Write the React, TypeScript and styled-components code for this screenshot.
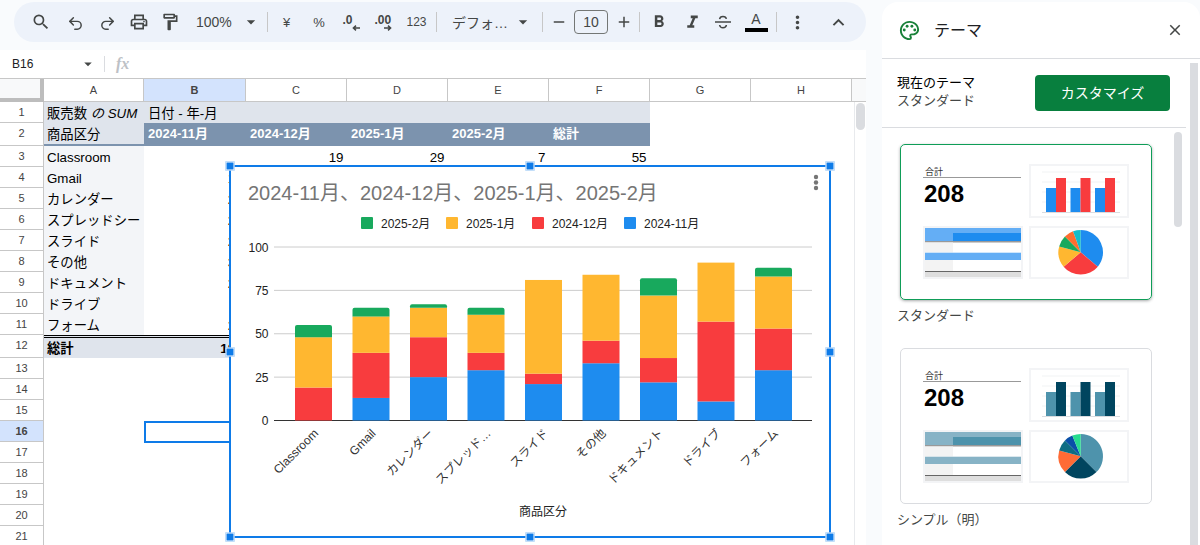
import React from 'react';
import styled, { createGlobalStyle } from 'styled-components';
import { Redo2, Undo2 } from 'lucide-react';
import {
  MdAdd,
  MdArrowDropDown,
  MdClose,
  MdFormatBold,
  MdFormatItalic,
  MdKeyboardArrowUp,
  MdMoreVert,
  MdOutlineFormatPaint,
  MdOutlinePalette,
  MdOutlinePrint,
  MdRemove,
  MdSearch,
} from 'react-icons/md';

const FONT = '"Liberation Sans", "Noto Sans CJK JP", sans-serif';
const SELECT_BLUE = '#0e7be8';

const SERIES = [
  { name: '2024-11月', color: '#1e8cef', legendX: 624 },
  { name: '2024-12月', color: '#f83c3e', legendX: 532 },
  { name: '2025-1月', color: '#ffb730', legendX: 446 },
  { name: '2025-2月', color: '#18a95d', legendX: 361 },
];

interface Product {
  name: string;
  label: string;
  values: number[];
}

const PRODUCTS: Product[] = [
  { name: 'Classroom', label: 'Classroom', values: [0, 19, 29, 7] },
  { name: 'Gmail', label: 'Gmail', values: [13, 26, 21, 5] },
  { name: 'カレンダー', label: 'カレンダー', values: [25, 23, 17, 2] },
  { name: 'スプレッドシー', label: 'スプレッド…', values: [29, 10, 22, 4] },
  { name: 'スライド', label: 'スライド', values: [21, 6, 54, 0] },
  { name: 'その他', label: 'その他', values: [33, 13, 38, 0] },
  { name: 'ドキュメント', label: 'ドキュメント', values: [22, 14, 36, 10] },
  { name: 'ドライブ', label: 'ドライブ', values: [11, 46, 34, 0] },
  { name: 'フォーム', label: 'フォーム', values: [29, 24, 30, 5] },
];

const COLUMNS = ['A', 'B', 'C', 'D', 'E', 'F', 'G', 'H'];
const MONTHS = [...SERIES.map((s) => s.name), '総計'];

const sum = (list: number[]) => list.reduce((a, b) => a + b, 0);

const GlobalStyle = createGlobalStyle`
  html, body {
    margin: 0;
    padding: 0;
    height: 545px;
    overflow: hidden;
    background: #f9fbfd;
    font-family: ${FONT};
  }
`;

function App() {
  return (
    <Page>
      <GlobalStyle />
      <Main>
        <Toolbar />
        <Sheet>
          <FormulaBar>
            <NameBox>
              B16
              <MdArrowDropDown size={18} />
            </NameBox>
            <FormulaDivider />
            <Fx>fx</Fx>
          </FormulaBar>
          <HeaderRow>
            <Corner />
            {COLUMNS.map((col, i) => (
              <ColHead key={col} $selected={col === 'B'} $w={i === 0 ? 100 : i === 1 ? 102 : 101}>
                {col}
              </ColHead>
            ))}
            <HeaderRest />
          </HeaderRow>
          <SheetBody>
            <Grid />
            <ScrollTrack>
              <ScrollThumb />
            </ScrollTrack>
          </SheetBody>
          <Chart />
        </Sheet>
      </Main>
      <ThemePanel />
    </Page>
  );
}

function Toolbar() {
  return (
    <ToolbarBar>
      <ToolBtn $w={34}>
        <MdSearch size={20} />
      </ToolBtn>
      <ToolBtn $w={34} $down={3}>
        <Undo2 size={17} strokeWidth={2.1} />
      </ToolBtn>
      <ToolBtn $w={30} $down={3}>
        <Redo2 size={17} strokeWidth={2.1} />
      </ToolBtn>
      <ToolBtn $w={34}>
        <MdOutlinePrint size={20} />
      </ToolBtn>
      <ToolBtn $w={28}>
        <MdOutlineFormatPaint size={20} />
      </ToolBtn>
      <ToolText $w={50} $pad={12}>
        100%
      </ToolText>
      <ToolBtn $w={33}>
        <MdArrowDropDown size={20} />
      </ToolBtn>
      <ToolDivider />
      <ToolBtn $w={37}>
        <SmallGlyph $size={13}>¥</SmallGlyph>
      </ToolBtn>
      <ToolBtn $w={28}>
        <SmallGlyph $size={13}>%</SmallGlyph>
      </ToolBtn>
      <ToolBtn $w={36}>
        <DecimalGlyph>
          .0
          <svg width="8" height="6" viewBox="0 0 8 6">
            <path d="M8 3H2M4 .6 1.4 3 4 5.4" fill="none" stroke="#444746" strokeWidth="1.5" />
          </svg>
        </DecimalGlyph>
      </ToolBtn>
      <ToolBtn $w={28}>
        <DecimalGlyph>
          .00
          <svg width="8" height="6" viewBox="0 0 8 6">
            <path d="M0 3h6M4 .6 6.6 3 4 5.4" fill="none" stroke="#444746" strokeWidth="1.5" />
          </svg>
        </DecimalGlyph>
      </ToolBtn>
      <ToolBtn $w={39}>
        <SmallGlyph $size={12}>123</SmallGlyph>
      </ToolBtn>
      <ToolDivider />
      <ToolText $w={67} $pad={15}>
        デフォ…
      </ToolText>
      <ToolBtn $w={38}>
        <MdArrowDropDown size={20} />
      </ToolBtn>
      <ToolDivider />
      <ToolBtn $w={31}>
        <MdRemove size={18} />
      </ToolBtn>
      <SizeInput>10</SizeInput>
      <ToolBtn $w={31}>
        <MdAdd size={18} />
      </ToolBtn>
      <ToolDivider />
      <ToolBtn $w={38}>
        <MdFormatBold size={20} />
      </ToolBtn>
      <ToolBtn $w={28}>
        <MdFormatItalic size={21} />
      </ToolBtn>
      <ToolBtn $w={34}>
        <svg width="18" height="18" viewBox="0 0 18 18" fill="none" stroke="#444746" strokeWidth="1.5">
          <path d="M1 9h16" />
          <path d="M5.6 6.2C5.8 4.4 7.2 3.5 9 3.5s3.1.8 3.4 2.3" />
          <path d="M5.6 12c.3 1.8 1.6 2.8 3.4 2.8s3.2-1 3.4-2.8" />
        </svg>
      </ToolBtn>
      <ToolBtn $w={32}>
        <TextColor>
          A
          <ColorBar />
        </TextColor>
      </ToolBtn>
      <ToolDivider $left={4} />
      <ToolBtn $w={40}>
        <MdMoreVert size={21} />
      </ToolBtn>
      <ToolBtn $w={42}>
        <MdKeyboardArrowUp size={23} />
      </ToolBtn>
    </ToolbarBar>
  );
}

function Grid() {
  const totals = [0, 1, 2, 3].map((i) => sum(PRODUCTS.map((p) => p.values[i])));

  return (
    <GridRows>
      <DataRow $h={21}>
        <RowHead>1</RowHead>
        <HeadCell $w={100}>
          販売数 <em>の SUM</em>
        </HeadCell>
        <HeadCell $w={506} $inset>
          日付 - 年-月
        </HeadCell>
      </DataRow>
      <DataRow $h={23}>
        <RowHead>2</RowHead>
        <HeadCell $w={100} $strip>
          商品区分
        </HeadCell>
        {MONTHS.map((m, i) => (
          <MonthCell key={m} $w={i === 0 ? 102 : 101}>
            {m}
          </MonthCell>
        ))}
      </DataRow>
      {PRODUCTS.map((p, i) => (
        <DataRow key={p.name} $h={21}>
          <RowHead>{i + 3}</RowHead>
          <NameCell $w={100}>{p.name}</NameCell>
          {p.values.map((v, j) => (
            <Cell key={j} $w={j === 0 ? 102 : 101}>
              {v || ''}
            </Cell>
          ))}
          <Cell>{sum(p.values)}</Cell>
        </DataRow>
      ))}
      <DataRow $h={23}>
        <RowHead>12</RowHead>
        <TotalCell $w={100}>総計</TotalCell>
        {totals.map((v, j) => (
          <TotalCell key={j} $right $w={j === 0 ? 102 : 101}>
            {v}
          </TotalCell>
        ))}
        <TotalCell $right>{sum(totals)}</TotalCell>
      </DataRow>
      {[13, 14, 15, 16, 17, 18, 19, 20, 21].map((n) => (
        <DataRow key={n} $h={21}>
          <RowHead $selected={n === 16}>{n}</RowHead>
          <Cell $w={100} />
          {n === 16 ? <SelectedCell /> : null}
        </DataRow>
      ))}
    </GridRows>
  );
}

const handles: [number, number][] = [
  [0, 0],
  [50, 0],
  [100, 0],
  [0, 50],
  [100, 50],
  [0, 100],
  [50, 100],
  [100, 100],
];

const PLOT_LEFT = 274;
const PLOT_RIGHT = 812;
const BASE_Y = 420.5;
const UNIT = 1.735;

function Chart() {
  return (
    <ChartBox>
      <ChartSvg viewBox="230 166 600 371">
        <text x="248" y="200" fontSize="20" fill="#757575">
          2024-11月、2024-12月、2025-1月、2025-2月
        </text>
        <circle cx="816" cy="177" r="2.2" fill="#757575" />
        <circle cx="816" cy="182.5" r="2.2" fill="#757575" />
        <circle cx="816" cy="188" r="2.2" fill="#757575" />

        {SERIES.map((s) => (
          <g key={s.name}>
            <rect x={s.legendX} y="217" width="12" height="12" rx="1" fill={s.color} />
            <text x={s.legendX + 20} y="227.5" fontSize="12" fill="#222">
              {s.name}
            </text>
          </g>
        ))}

        {[0, 25, 50, 75, 100].map((tick) => {
          const y = BASE_Y - tick * UNIT;
          return (
            <g key={tick}>
              <line
                x1={PLOT_LEFT}
                x2={PLOT_RIGHT}
                y1={y}
                y2={y}
                stroke={tick === 0 ? '#333' : '#ccc'}
                strokeWidth="1"
              />
              <text x="268.5" y={y + 4.5} fontSize="12" textAnchor="end" fill="#222">
                {tick}
              </text>
            </g>
          );
        })}

        {PRODUCTS.map((p, i) => {
          const x = 295 + 57.5 * i;
          let stacked = 0;
          return (
            <g key={p.name}>
              {p.values.map((v, j) => {
                if (!v) return null;
                const bottom = BASE_Y - stacked * UNIT;
                stacked += v;
                const top = BASE_Y - stacked * UNIT;
                if (j === 3) {
                  return (
                    <path
                      key={j}
                      fill={SERIES[j].color}
                      d={`M${x} ${bottom}V${top + 2}q0-2 2-2h33q2 0 2 2V${bottom}z`}
                    />
                  );
                }
                return <rect key={j} x={x} y={top} width="37" height={bottom - top} fill={SERIES[j].color} />;
              })}
              <text
                transform={`translate(${x + 24} 434) rotate(-45)`}
                fontSize="12"
                textAnchor="end"
                fill="#333"
              >
                {p.label}
              </text>
            </g>
          );
        })}

        <text x="543" y="515.5" fontSize="12" textAnchor="middle" fill="#222">
          商品区分
        </text>
      </ChartSvg>
      {handles.map(([x, y]) => (
        <Handle key={`${x}-${y}`} $x={x} $y={y} />
      ))}
    </ChartBox>
  );
}

interface Palette {
  light: string;
  dark: string;
  accent: string;
  tableLight: string;
  pie: [string, number][];
}

const STANDARD: Palette = {
  light: '#1e8cef',
  dark: '#f83c3e',
  accent: '#1e8cef',
  tableLight: '#64aef5',
  pie: [
    ['#1e8cef', 130],
    ['#f83c3e', 230],
    ['#ffb730', 285],
    ['#18a95d', 315],
    ['#ff6d2f', 340],
    ['#14bdca', 360],
  ],
};

const SIMPLE: Palette = {
  light: '#4e93ac',
  dark: '#00455f',
  accent: '#4e93ac',
  tableLight: '#87b3c6',
  pie: [
    ['#4e93ac', 135],
    ['#00455f', 225],
    ['#ff6b35', 285],
    ['#0e6d83', 315],
    ['#0a50a8', 338],
    ['#27dc8f', 360],
  ],
};

function wedge(start: number, end: number) {
  const cx = 51.7;
  const cy = 26.3;
  const r = 22.3;
  const pt = (deg: number) => {
    const a = ((deg - 90) * Math.PI) / 180;
    return `${cx + r * Math.cos(a)} ${cy + r * Math.sin(a)}`;
  };
  return `M${cx} ${cy}L${pt(start)}A${r} ${r} 0 ${end - start > 180 ? 1 : 0} 1 ${pt(end)}Z`;
}

function ThemeThumb({ palette }: { palette: Palette }) {
  return (
    <ThumbGrid>
      <Stat>
        <StatLabel>合計</StatLabel>
        <StatValue>208</StatValue>
      </Stat>
      <MiniSvg width="100" height="54" viewBox="0 0 100 54">
        {[8, 18, 28, 38].map((y) => (
          <line key={y} x1="13" x2="91" y1={y} y2={y} stroke="#f1f3f4" />
        ))}
        {[17, 41.5, 66].map((x) => (
          <g key={x}>
            <rect x={x} y="24" width="10" height="24" fill={palette.light} />
            <rect x={x + 10} y="14" width="10" height="34" fill={palette.dark} />
          </g>
        ))}
        <line x1="13" x2="91" y1="48.5" y2="48.5" stroke="#dadce0" />
      </MiniSvg>
      <MiniSvg width="100" height="53" viewBox="0 0 100 53">
        <rect x="0" y="1" width="100" height="14" fill={palette.tableLight} />
        <rect x="30" y="7" width="70" height="8" fill={palette.accent} />
        <rect x="0" y="15" width="100" height="1.5" fill="#999" />
        <rect x="0" y="16.5" width="30" height="10" fill="#f3f3f3" />
        <rect x="0" y="26.7" width="100" height="7.3" fill={palette.tableLight} />
        <rect x="0" y="34" width="30" height="11" fill="#f3f3f3" />
        <rect x="0" y="45" width="100" height="1" fill="#666" />
        <rect x="0" y="46" width="100" height="7" fill="#dedede" />
      </MiniSvg>
      <MiniSvg width="100" height="53" viewBox="0 0 100 53">
        {palette.pie.map(([color, end], i) => (
          <path key={color} d={wedge(i ? palette.pie[i - 1][1] : 0, end)} fill={color} />
        ))}
      </MiniSvg>
    </ThumbGrid>
  );
}

function ThemePanel() {
  return (
    <Panel>
      <PanelHeader>
        <MdOutlinePalette size={23} color="#188038" />
        <PanelTitle>テーマ</PanelTitle>
        <CloseBtn>
          <MdClose size={18} />
        </CloseBtn>
      </PanelHeader>
      <PanelBody>
        <PanelContent>
          <CurrentRow>
            <CurrentText>
              <CurrentLabel>現在のテーマ</CurrentLabel>
              <CurrentName>スタンダード</CurrentName>
            </CurrentText>
            <CustomizeBtn>カスタマイズ</CustomizeBtn>
          </CurrentRow>
          <CardArea>
            <CardList>
              <ThemeCard $active>
                <ThemeThumb palette={STANDARD} />
              </ThemeCard>
              <CardLabel>スタンダード</CardLabel>
              <ThemeCard>
                <ThemeThumb palette={SIMPLE} />
              </ThemeCard>
              <CardLabel>シンプル（明）</CardLabel>
            </CardList>
            <InnerThumb />
          </CardArea>
        </PanelContent>
        <OuterThumb />
      </PanelBody>
    </Panel>
  );
}

export default App;

const Page = styled.div`
  display: flex;
  width: 1200px;
  height: 545px;
  overflow: hidden;
  background: #f9fbfd;
  font-family: ${FONT};
`;
const Main = styled.div`
  display: flex;
  flex-direction: column;
  width: 866px;
  flex: none;
`;
const ToolbarBar = styled.div`
  display: flex;
  align-items: center;
  height: 40px;
  margin: 2px 0 8px 14px;
  padding-left: 10px;
  border-radius: 20px;
  background: #edf2fa;
  color: #444746;
`;
const ToolBtn = styled.div<{ $w: number; $down?: number }>`
  display: flex;
  align-items: center;
  justify-content: center;
  flex: none;
  box-sizing: border-box;
  width: ${(p) => p.$w}px;
  height: 40px;
  padding-top: ${(p) => p.$down || 0}px;
`;
const ToolText = styled.div<{ $w: number; $pad: number }>`
  flex: none;
  box-sizing: border-box;
  width: ${(p) => p.$w}px;
  padding-left: ${(p) => p.$pad}px;
  font-size: 14px;
  white-space: nowrap;
`;
const ToolDivider = styled.div<{ $left?: number }>`
  flex: none;
  width: 1px;
  height: 20px;
  margin-left: ${(p) => p.$left || 0}px;
  background: #c7c7c7;
`;
const SmallGlyph = styled.span<{ $size: number }>`
  font-size: ${(p) => p.$size}px;
`;
const DecimalGlyph = styled.span`
  display: flex;
  flex-direction: column;
  align-items: flex-start;
  width: 17px;
  margin-top: 2px;
  font-size: 12px;
  font-weight: bold;
  line-height: 10px;
  svg {
    display: block;
    align-self: flex-end;
  }
`;
const SizeInput = styled.div`
  flex: none;
  box-sizing: border-box;
  width: 34px;
  height: 24px;
  border: 1px solid #747775;
  border-radius: 4px;
  font-size: 14px;
  line-height: 22px;
  text-align: center;
`;
const TextColor = styled.div`
  display: flex;
  flex-direction: column;
  align-items: center;
  font-size: 14px;
  line-height: 14px;
`;
const ColorBar = styled.div`
  width: 23px;
  height: 4px;
  margin-top: 2px;
  background: #000;
`;

const Sheet = styled.div`
  position: relative;
  display: flex;
  flex: 1;
  flex-direction: column;
  min-height: 0;
  background: #fff;
`;
const FormulaBar = styled.div`
  display: flex;
  align-items: center;
  height: 28px;
  flex: none;
  border-bottom: 1px solid #c7c7c7;
`;
const NameBox = styled.div`
  display: flex;
  align-items: center;
  justify-content: space-between;
  box-sizing: border-box;
  width: 104px;
  padding: 0 7px 0 12px;
  font-size: 12px;
  color: #202124;
  svg {
    color: #444746;
  }
`;
const FormulaDivider = styled.div`
  width: 1px;
  height: 16px;
  background: #dadce0;
`;
const Fx = styled.div`
  margin-left: 11px;
  font-family: 'Liberation Serif', serif;
  font-size: 16px;
  font-style: italic;
  font-weight: bold;
  color: #bdc1c6;
`;
const HeaderRow = styled.div`
  display: flex;
  flex: none;
  height: 23px;
  box-sizing: border-box;
  border-bottom: 1px solid #c7c7c7;
`;
const Corner = styled.div`
  box-sizing: border-box;
  flex: none;
  width: 44px;
  height: 23px;
  background: #f8f9fa;
  border-right: 4px solid #bdbdbd;
  border-bottom: 4px solid #bdbdbd;
`;
const ColHead = styled.div<{ $selected?: boolean; $w: number }>`
  box-sizing: border-box;
  flex: none;
  width: ${(p) => p.$w}px;
  border-right: 1px solid #c7c7c7;
  background: ${(p) => (p.$selected ? '#d3e3fd' : '#fff')};
  font-size: 11px;
  font-weight: ${(p) => (p.$selected ? 'bold' : 'normal')};
  line-height: 22px;
  text-align: center;
  color: #444;
`;
const HeaderRest = styled.div`
  flex: 1;
  background: #f8f9fa;
`;
const SheetBody = styled.div`
  display: flex;
  flex: 1;
  min-height: 0;
  overflow: hidden;
`;
const GridRows = styled.div`
  flex: 1;
`;
const DataRow = styled.div<{ $h: number }>`
  display: flex;
  height: ${(p) => p.$h}px;
`;
const RowHead = styled.div<{ $selected?: boolean }>`
  box-sizing: border-box;
  flex: none;
  width: 44px;
  border-right: 1px solid #c7c7c7;
  border-bottom: 1px solid #c7c7c7;
  background: ${(p) => (p.$selected ? '#d3e3fd' : '#fff')};
  font-size: 11px;
  font-weight: ${(p) => (p.$selected ? 'bold' : 'normal')};
  line-height: 20px;
  text-align: center;
  color: #444;
`;
const Cell = styled.div<{ $w?: number }>`
  box-sizing: border-box;
  flex: none;
  width: ${(p) => p.$w || 101}px;
  padding: 0 3.5px 0 3px;
  overflow: hidden;
  font-size: 13.33px;
  line-height: 23px;
  text-align: right;
  white-space: nowrap;
  color: #000;
`;
const NameCell = styled(Cell)`
  background: #f3f5f8;
  text-align: left;
`;
const HeadCell = styled(Cell)<{ $inset?: boolean; $strip?: boolean }>`
  padding-left: ${(p) => (p.$inset ? 4 : 3)}px;
  background: #dfe4ec;
  text-align: left;
  border-bottom: ${(p) => (p.$strip ? '2px solid #7c93ae' : '0')};
`;
const MonthCell = styled(Cell)`
  padding-left: 4px;
  background: #7c93ae;
  font-size: 13px;
  font-weight: bold;
  line-height: 22px;
  text-align: left;
  color: #fff;
`;
const TotalCell = styled(Cell)<{ $right?: boolean }>`
  border-top: 3px double #000;
  background: #dfe4ec;
  font-weight: bold;
  line-height: 21px;
  text-align: ${(p) => (p.$right ? 'right' : 'left')};
`;
const SelectedCell = styled.div`
  box-sizing: border-box;
  flex: none;
  width: 102px;
  height: 22px;
  border: 2px solid ${SELECT_BLUE};
`;
const ScrollTrack = styled.div`
  box-sizing: border-box;
  flex: none;
  width: 12px;
  padding: 1px 1px 0;
  border-left: 1px solid #e8eaed;
`;
const ScrollThumb = styled.div`
  height: 27px;
  border-radius: 5px;
  background: #dadce0;
`;

const ChartBox = styled.div`
  position: absolute;
  left: 230px;
  top: 116px;
  width: 600px;
  height: 371px;
  background: #fff;
  box-shadow:
    0 0 0 1px ${SELECT_BLUE},
    inset 0 0 0 1px ${SELECT_BLUE};
`;
const ChartSvg = styled.svg`
  display: block;
  width: 100%;
  height: 100%;
  font-family: ${FONT};
`;
const Handle = styled.div<{ $x: number; $y: number }>`
  position: absolute;
  left: ${(p) => p.$x}%;
  top: ${(p) => p.$y}%;
  box-sizing: border-box;
  width: 9px;
  height: 9px;
  border: 1px solid #fff;
  background: ${SELECT_BLUE};
  transform: translate(-50%, -50%);
`;

const Panel = styled.div`
  display: flex;
  flex-direction: column;
  flex: none;
  box-sizing: border-box;
  width: 318px;
  height: 543px;
  margin: 2px 0 0 16px;
  border-radius: 16px 16px 0 0;
  background: #fff;
`;
const PanelHeader = styled.div`
  display: flex;
  align-items: center;
  flex: none;
  height: 56px;
  padding-left: 16px;
  border-bottom: 1px solid #dadce0;
`;
const PanelTitle = styled.div`
  margin: 0 0 3px 13px;
  font-size: 16px;
  color: #202124;
`;
const CloseBtn = styled.div`
  display: flex;
  margin-left: auto;
  padding-right: 16px;
  color: #444746;
`;
const PanelBody = styled.div`
  display: flex;
  flex: 1;
  min-height: 0;
`;
const PanelContent = styled.div`
  flex: none;
  width: 304px;
`;
const CurrentRow = styled.div`
  display: flex;
  align-items: center;
  justify-content: space-between;
  box-sizing: border-box;
  height: 69px;
  padding: 0 16px 0 15px;
  border-bottom: 1px solid #dadce0;
`;
const CurrentText = styled.div`
  margin-bottom: 4px;
`;
const CurrentLabel = styled.div`
  font-size: 13px;
  line-height: 18px;
  color: #000;
`;
const CurrentName = styled.div`
  font-size: 13px;
  line-height: 17px;
  color: #444746;
`;
const CustomizeBtn = styled.div`
  width: 135px;
  height: 36px;
  border-radius: 4px;
  background: #087f3e;
  font-size: 14px;
  line-height: 36px;
  text-align: center;
  color: #fff;
`;
const CardArea = styled.div`
  display: flex;
  justify-content: space-between;
  align-items: flex-start;
`;
const CardList = styled.div`
  padding: 16px 0 0 18px;
`;
const ThemeCard = styled.div<{ $active?: boolean }>`
  box-sizing: border-box;
  width: 252px;
  height: 156px;
  padding: 19px 22px;
  border: 1px solid ${(p) => (p.$active ? '#0f9d58' : '#dadce0')};
  border-radius: 5px;
  box-shadow: ${(p) => (p.$active ? '0 1px 3px rgba(60, 64, 67, 0.45)' : 'none')};
`;
const CardLabel = styled.div`
  height: 30px;
  margin: 0 0 18px -3px;
  font-size: 13px;
  line-height: 32px;
  color: #444746;
`;
const ThumbGrid = styled.div`
  display: grid;
  grid-template-columns: 100px 100px;
  grid-template-rows: 54px 53px;
  column-gap: 6px;
  row-gap: 8px;
`;
const Stat = styled.div`
  display: flex;
  flex-direction: column;
`;
const StatLabel = styled.div`
  box-sizing: border-box;
  width: 98px;
  height: 14px;
  padding: 3px 0 0 2px;
  border-bottom: 1.5px solid #999;
  font-size: 9px;
  line-height: 11px;
  color: #333;
`;
const StatValue = styled.div`
  margin: 4px 0 0 1px;
  font-size: 24px;
  font-weight: bold;
  line-height: 24px;
  color: #000;
`;
const MiniSvg = styled.svg`
  display: block;
  outline: 2px solid #f3f4f6;
  outline-offset: -2px;
`;
const InnerThumb = styled.div`
  width: 8px;
  height: 95px;
  margin: 4px 4px 0 0;
  border-radius: 4px;
  background: #dadce0;
`;
const OuterThumb = styled.div`
  width: 8px;
  margin: 4px 2px 0 4px;
  background: #dadce0;
`;
